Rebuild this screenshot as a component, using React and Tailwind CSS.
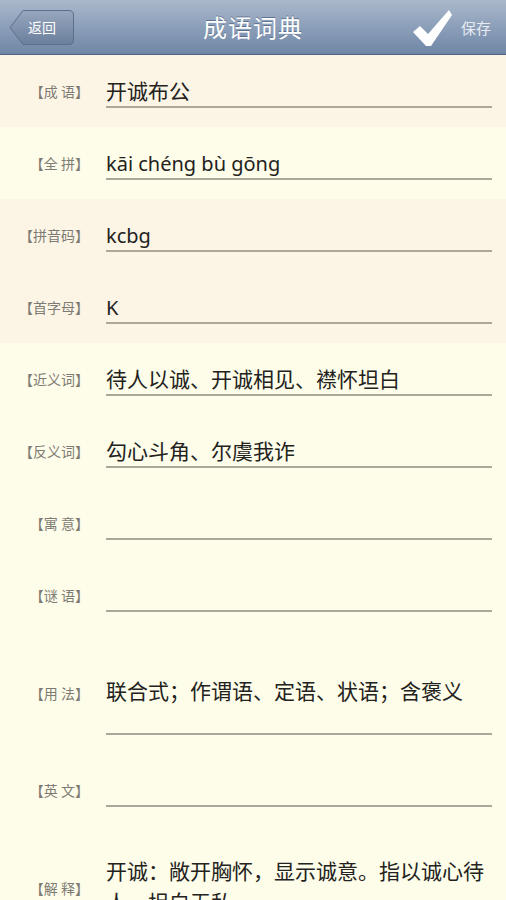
import React from "react";

const CJK = { fontFamily: '"Noto Sans CJK SC", "Noto Sans", sans-serif' };

function Row({ label, value, bg, h = 72, pt = 21, fieldH = 53, leading = 28 }) {
  return (
    <div className={`flex ${bg}`} style={{ height: h }}>
      <div className="w-[89px] self-center text-right text-[14px] leading-[18px] text-[#7d7b74] whitespace-nowrap">
        {label}
      </div>
      <div className="ml-[17px] mr-[14px] flex-1 self-start">
        <div
          className="border-b-2 border-[#a9a89b] text-[21px] text-[#232220] box-border overflow-hidden"
          style={{ paddingTop: pt, height: fieldH, lineHeight: `${leading}px` }}
        >
          {value}
        </div>
      </div>
    </div>
  );
}

const Latin = ({ children }) => (
  <span style={{ fontFamily: '"Noto Sans", sans-serif', fontSize: 20 }}>{children}</span>
);

export default function App() {
  const pink = "bg-[#fcf5e6]";
  const yellow = "bg-[#fdfde9]";
  return (
    <div className="w-[506px] h-[900px] overflow-hidden bg-[#fdfde9]" style={CJK}>
      {/* Header */}
      <div className="relative h-[55px] bg-gradient-to-b from-[#aab8cb] via-[#8c9fb9] to-[#6e86a5] border-b border-[#4f6280] flex items-center justify-center">
        <div className="absolute left-[9px] top-[9px] w-[66px] h-[37px]">
          <svg width="66" height="37" viewBox="0 0 66 37" className="absolute inset-0">
            <defs>
              <linearGradient id="bb" x1="0" y1="0" x2="0" y2="1">
                <stop offset="0" stopColor="#97a7bd" />
                <stop offset="1" stopColor="#6a7f9d" />
              </linearGradient>
            </defs>
            <path
              d="M1 18.5 L14 1.5 H60 Q64.5 1.5 64.5 6 V31 Q64.5 35.5 60 35.5 H14 Z"
              fill="url(#bb)"
              stroke="#5c6f8b"
              strokeWidth="1"
            />
          </svg>
          <span className="absolute left-[19px] top-[9px] text-[14px] leading-[18px] text-white">返回</span>
        </div>
        <div className="text-[24px] leading-[30px] text-white tracking-[1px]" style={{ textShadow: "0 -1px 0 rgba(60,80,110,0.6)" }}>
          成语词典
        </div>
        <svg className="absolute left-[413px] top-[9px]" width="40" height="38" viewBox="0 0 40 38">
          <polygon points="0,23 7,17 15,25 36,1 39,6 18,37 13,37" fill="#ffffff" />
        </svg>
        <span className="absolute left-[461px] top-[19px] text-[15px] leading-[18px] text-[#e6ebf2]">保存</span>
      </div>

      <Row label="【成 语】" value="开诚布公" bg={pink} />
      <Row label="【全 拼】" value={<Latin>kāi chéng bù gōng</Latin>} bg={yellow} />
      <Row label="【拼音码】" value={<Latin>kcbg</Latin>} bg={pink} />
      <Row label="【首字母】" value={<Latin>K</Latin>} bg={pink} />
      <Row label="【近义词】" value="待人以诚、开诚相见、襟怀坦白" bg={yellow} />
      <Row label="【反义词】" value="勾心斗角、尔虞我诈" bg={yellow} />
      <Row label="【寓 意】" value="" bg={yellow} />
      <Row label="【谜 语】" value="" bg={yellow} />
      <Row label="【用 法】" value="联合式；作谓语、定语、状语；含褒义" bg={yellow} h={123} pt={45} fieldH={104} />
      <Row label="【英 文】" value="" bg={yellow} />
      <div className={`flex ${yellow} h-[124px]`}>
        <div className="w-[89px] self-center text-right text-[14px] leading-[18px] text-[#7d7b74] whitespace-nowrap">
          【解 释】
        </div>
        <div className="ml-[17px] mr-[14px] flex-1 pt-[29px] text-[21px] leading-[31px] text-[#232220]">
          开诚：敞开胸怀，显示诚意。指以诚心待人，坦白无私。
        </div>
      </div>
    </div>
  );
}
